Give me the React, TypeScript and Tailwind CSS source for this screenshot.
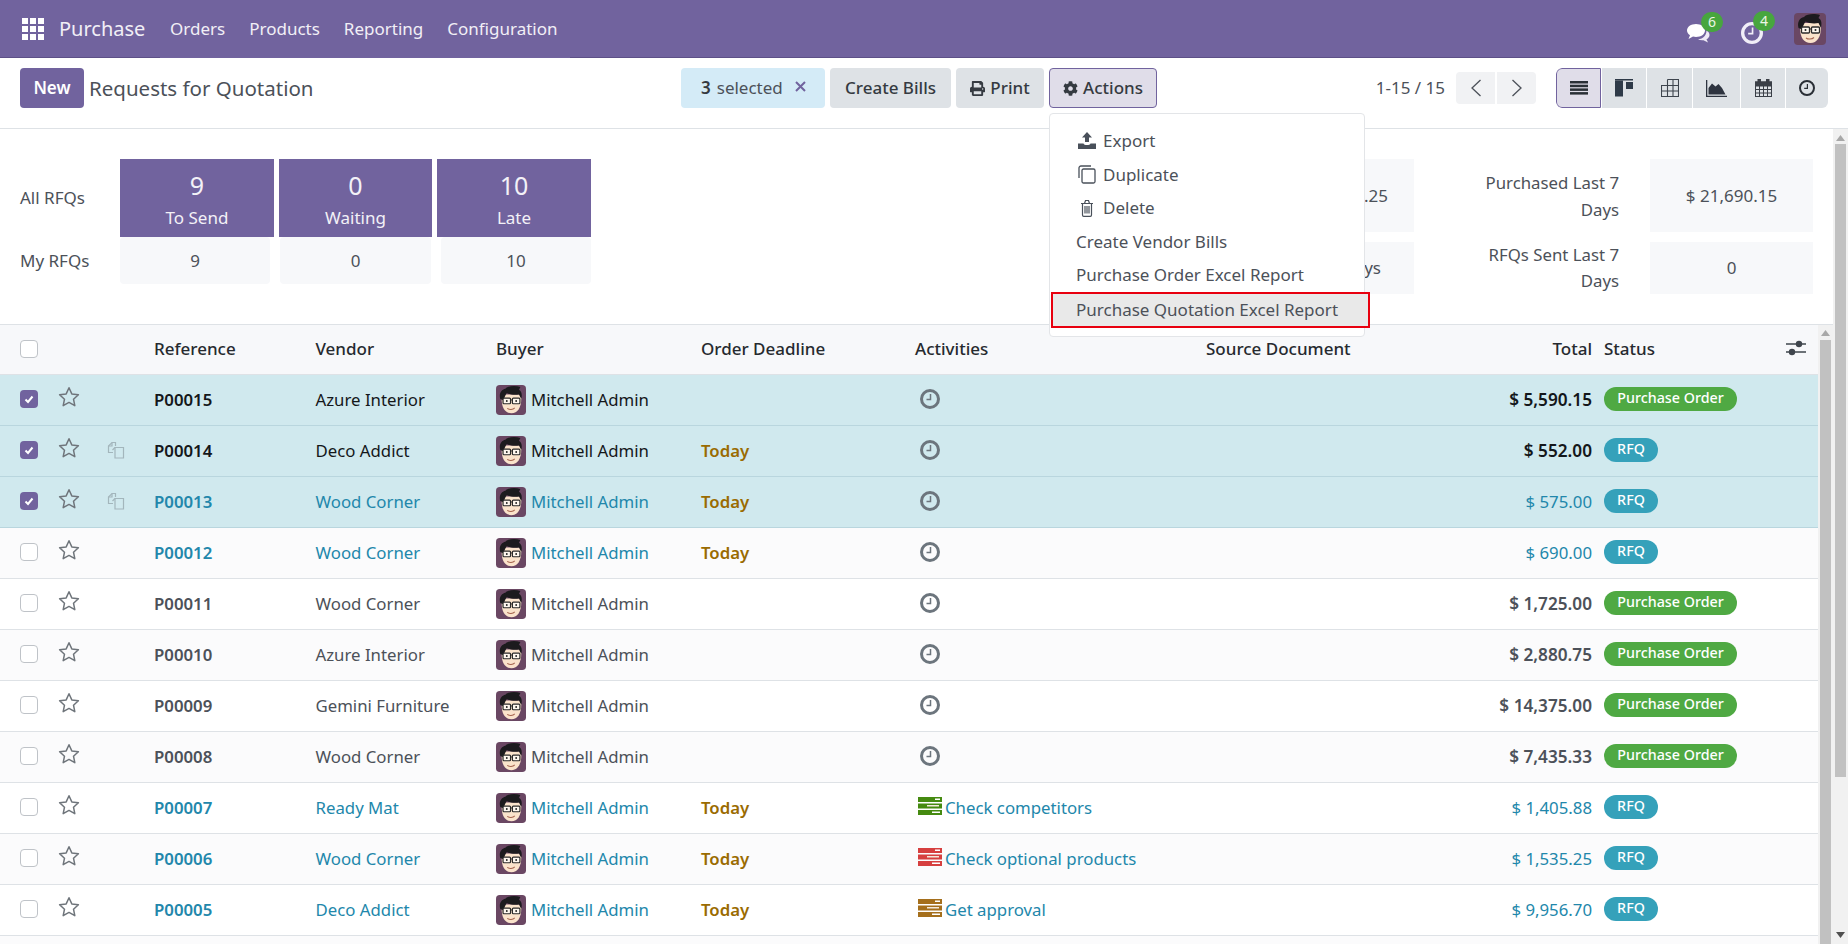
import { FaCog, FaPrint } from 'react-icons/fa';

type Row = {
  ref: string;
  vendor: string;
  total: string;
  status: 'po' | 'rfq';
  today?: boolean;
  selected?: boolean;
  link?: boolean;
  copy?: boolean;
  activity?: { label: string; color: string };
};

const rows: Row[] = [
  { ref: 'P00015', vendor: 'Azure Interior', total: '$ 5,590.15', status: 'po', selected: true },
  { ref: 'P00014', vendor: 'Deco Addict', total: '$ 552.00', status: 'rfq', today: true, selected: true, copy: true },
  { ref: 'P00013', vendor: 'Wood Corner', total: '$ 575.00', status: 'rfq', today: true, selected: true, link: true, copy: true },
  { ref: 'P00012', vendor: 'Wood Corner', total: '$ 690.00', status: 'rfq', today: true, link: true },
  { ref: 'P00011', vendor: 'Wood Corner', total: '$ 1,725.00', status: 'po' },
  { ref: 'P00010', vendor: 'Azure Interior', total: '$ 2,880.75', status: 'po' },
  { ref: 'P00009', vendor: 'Gemini Furniture', total: '$ 14,375.00', status: 'po' },
  { ref: 'P00008', vendor: 'Wood Corner', total: '$ 7,435.33', status: 'po' },
  { ref: 'P00007', vendor: 'Ready Mat', total: '$ 1,405.88', status: 'rfq', today: true, link: true, activity: { label: 'Check competitors', color: '#458a10' } },
  { ref: 'P00006', vendor: 'Wood Corner', total: '$ 1,535.25', status: 'rfq', today: true, link: true, activity: { label: 'Check optional products', color: '#d63f3f' } },
  { ref: 'P00005', vendor: 'Deco Addict', total: '$ 9,956.70', status: 'rfq', today: true, link: true, activity: { label: 'Get approval', color: '#a56f1c' } },
];

function Avatar({ size }: { size: number }) {
  return (
    <svg width={size} height={size} viewBox="0 0 32 32" className="shrink-0">
      <rect width="32" height="32" rx="4" fill="#6a4763" />
      <path d="M6 14c0 11 4 16 10.500 16S27 24 27 14l-2-4H9z" fill="#fae3cb" />
      <path d="M4.500 15C3 9 5.500 5 10 4c3-3.500 11-3.500 16-2l-1.500 3c3 1.500 3.500 5 2.500 10l-2.500-5c-4 1-9.500 .5-13-1.500-1 2-2 3-3 6.500l-1.500 1z" fill="#1c1b1e" />
      <rect x="7.500" y="14" width="8" height="6" rx="1" fill="#fff8ef" stroke="#2b2b2b" strokeWidth="1.300" />
      <rect x="17.500" y="14" width="8" height="6" rx="1" fill="#fff8ef" stroke="#2b2b2b" strokeWidth="1.300" />
      <path d="M15.500 16h2" stroke="#2b2b2b" strokeWidth="1" />
      <circle cx="11.500" cy="17" r="1" fill="#222" />
      <circle cx="21.500" cy="17" r="1" fill="#222" />
      <path d="M12 25c2 1.500 6 1.500 8-.5" stroke="#a5654f" strokeWidth="1.100" fill="none" />
    </svg>
  );
}

function Clock({ size, color, width }: { size: number; color: string; width: number }) {
  return (
    <svg width={size} height={size} viewBox="0 0 20 20" fill="none" className="shrink-0">
      <circle cx="10" cy="10" r={10 - width / 2} stroke={color} strokeWidth={width} />
      <path d="M10.500 5v5.500H6.500" stroke={color} strokeWidth="1.500" />
    </svg>
  );
}

function Star() {
  return (
    <svg width="22" height="21" viewBox="0 0 22 21" fill="none" className="shrink-0">
      <path d="M11 1.800l2.800 6.100 6.600.8-4.900 4.500 1.300 6.500L11 16.400l-5.800 3.300 1.300-6.500L1.600 8.700l6.600-.8z" stroke="#6f757b" strokeWidth="1.500" strokeLinejoin="round" />
    </svg>
  );
}

function CopyIcon() {
  return (
    <svg width="18" height="18" viewBox="0 0 18 18" fill="none" stroke="#a3b6bc" strokeWidth="1.200" className="shrink-0">
      <path d="M6 11.500H1.500V5L5 1.500h3.500V5" />
      <path d="M8 6.500h8.500v10.500H8z" />
      <path d="M5 1.500V5H1.500M8 6.500L5.500 9" />
    </svg>
  );
}

function ActivityIcon({ color }: { color: string }) {
  return (
    <svg width="24" height="18" viewBox="0 0 24 18" className="shrink-0">
      <rect width="24" height="5" fill={color} />
      <rect y="6.500" width="24" height="5" fill={color} />
      <rect y="13" width="24" height="5" fill={color} />
      <rect x="17" y="1.500" width="5" height="1.500" fill="#fff" />
      <rect x="9" y="8" width="12" height="1.500" fill="#f3e9dc" />
      <rect x="14" y="14.500" width="8" height="1.500" fill="#fff" />
    </svg>
  );
}

function Check({ on }: { on?: boolean }) {
  if (on) {
    return (
      <span className="flex h-[18px] w-[18px] items-center justify-center rounded-[4px] bg-[#71639e]">
        <svg width="12" height="12" viewBox="0 0 12 12" fill="none">
          <path d="M2.500 6.500l2.500 2.500 4.500-5.500" stroke="#fff" strokeWidth="2" />
        </svg>
      </span>
    );
  }
  return <span className="block h-[18px] w-[18px] rounded-[4px] border border-[#bfc3c8] bg-white" />;
}

function TopBar() {
  return (
    <nav className="flex h-[58px] shrink-0 bg-[#71639e] text-white">
      <div className="flex h-full w-[160px] shrink-0 items-center border-b border-[#5d5087] pl-[22px]">
        <svg width="22" height="22" viewBox="0 0 22 22" fill="#fff" className="shrink-0">
          <rect width="6" height="6" />
          <rect x="8" width="6" height="6" />
          <rect x="16" width="6" height="6" />
          <rect y="8" width="6" height="6" />
          <rect x="8" y="8" width="6" height="6" />
          <rect x="16" y="8" width="6" height="6" />
          <rect y="16" width="6" height="6" />
          <rect x="8" y="16" width="6" height="6" />
          <rect x="16" y="16" width="6" height="6" />
        </svg>
        <span className="ml-[15px] text-[20px] text-[#f1eff6]">Purchase</span>
      </div>
      <div className="flex h-full items-center gap-[24px] pl-[10px] text-[17px] text-[#f1eff6]">
        <span>Orders</span>
        <span>Products</span>
        <span>Reporting</span>
        <span>Configuration</span>
      </div>
      <div className="ml-auto flex h-full w-[1278px] items-center justify-end border-b border-[#5d5087] pr-[22px]">
        <div className="relative mr-[31px] mt-[2px]">
          <svg width="24" height="20" viewBox="0 0 24 20" fill="#fff" className="mt-[6px] block">
            <path d="M10 1c5 0 9 2.800 9 6.500S15 14 10 14c-1 0-2-.1-3-.4L2.500 16 4 12.300C2 11 1 9.400 1 7.500 1 3.800 5 1 10 1z" />
            <path d="M20.500 7.500c2 1.200 3 2.800 3 4.500s-1 3.200-3 4.300l1.500 3.200-4.500-2.300c-2 .3-4-.1-5.500-1 4 0 8.500-3 8.500-8.700z" fill="#eee9f6" />
          </svg>
          <span className="absolute left-[15px] top-[-5px] flex h-[20px] w-[22px] items-center justify-center rounded-full bg-[#47a63e] text-[14px] text-[#eef6e6]">6</span>
        </div>
        <div className="relative mr-[31px] mt-[2px]">
          <div className="mt-[6px]">
            <Clock size={22} color="#f1eef8" width={3} />
          </div>
          <span className="absolute left-[12px] top-[-5px] flex h-[20px] w-[22px] items-center justify-center rounded-full bg-[#47a63e] text-[14px] text-[#eef6e6]">4</span>
        </div>
        <Avatar size={32} />
      </div>
    </nav>
  );
}

function ViewButton({ active, w, children }: { active?: boolean; w: string; children: React.ReactNode }) {
  return (
    <span className={`flex h-[40px] items-center justify-center ${w} ${active ? 'rounded-l-[6px] border border-[#71639e] bg-[#e0dde9]' : 'bg-[#dee2e6]'}`}>
      {children}
    </span>
  );
}

function ActionsMenu() {
  const item = 'flex h-[33.600px] items-center pl-[26px] text-[17px] text-[#4c5159]';
  return (
    <div className="absolute left-0 top-[45px] z-20 h-[224px] w-[316px] rounded-[4px] border border-[#e3e5e8] bg-white pt-[10px]">
      <div className={item}>
        <svg width="18" height="17" viewBox="0 0 18 17" fill="#49505a" className="mr-[7px] ml-[2px]">
          <path d="M9 0l5 5.500h-3V10H7V5.500H4z" />
          <path d="M0 11.500h5.500c.5 1 1.500 1.500 3.500 1.500s3-.5 3.500-1.500H18V17H0z" />
        </svg>
        Export
      </div>
      <div className={item}>
        <svg width="18" height="19" viewBox="0 0 18 19" fill="none" stroke="#49505a" strokeWidth="1.300" className="mr-[7px] ml-[2px]">
          <path d="M1 13V3c0-1 .8-2 2-2h10" />
          <rect x="4" y="4" width="13" height="14" rx="1.500" />
        </svg>
        Duplicate
      </div>
      <div className={item}>
        <svg width="18" height="18" viewBox="0 0 18 18" fill="none" stroke="#49505a" strokeWidth="1.200" className="mr-[7px] ml-[2px]">
          <path d="M3 4.500h12M4.500 4.500V16c0 .8.500 1.300 1.200 1.300h6.600c.7 0 1.200-.5 1.200-1.300V4.500M6.500 4.500l1-3h3l1 3M7 7v7.500M9 7v7.500M11 7v7.500" />
        </svg>
        Delete
      </div>
      <div className={item}>Create Vendor Bills</div>
      <div className={item}>Purchase Order Excel Report</div>
      <div className="ml-px flex h-[36px] w-[319px] items-center border-2 border-[#e8000f] bg-[#e9e9e9] pl-[23px] text-[17px] text-[#4c5159]">
        Purchase Quotation Excel Report
      </div>
    </div>
  );
}

function ControlPanel() {
  return (
    <div className="flex h-[71px] shrink-0 items-start border-b border-[#dee2e6] pt-[10px]">
      <div className="flex w-[681px] shrink-0 items-center pl-[20px]">
        <span className="flex h-[40px] w-[64px] items-center justify-center rounded-[4px] bg-[#71639e] text-[17px] font-semibold text-white">New</span>
        <span className="ml-[5px] text-[20.500px] text-[#4c5159]">Requests for Quotation</span>
      </div>
      <div className="flex items-center gap-[5px] text-[17px] text-[#353a41]">
        <span className="flex h-[40px] w-[144px] items-center rounded-[4px] bg-[#d4ebf7] pl-[20px] text-[#4c5159]">
          <b className="mr-[6px] font-semibold text-[#353a41]">3</b>selected
          <svg width="13" height="13" viewBox="0 0 13 13" className="ml-[11px] mb-[4px]">
            <path d="M2 2l9 9M11 2l-9 9" stroke="#71639e" strokeWidth="2" />
          </svg>
        </span>
        <span className="flex h-[40px] w-[121px] items-center justify-center rounded-[4px] bg-[#dee2e6] font-medium">Create Bills</span>
        <span className="flex h-[40px] w-[88px] items-center justify-center gap-[5px] rounded-[4px] bg-[#dee2e6] font-medium">
          <FaPrint size={15} />
          Print
        </span>
        <div className="relative">
          <span className="flex h-[40px] w-[108px] items-center justify-center gap-[5px] rounded-[4px] border border-[#71639e] bg-[#e0dde9] font-medium">
            <FaCog size={15} />
            Actions
          </span>
          <ActionsMenu />
        </div>
      </div>
      <div className="ml-auto flex items-center pr-[20px]">
        <span className="mr-[11px] text-[17px] text-[#4c5159]">1-15 / 15</span>
        <span className="flex h-[32px] w-[39px] items-center justify-center rounded-l-[4px] bg-[#f1f2f4]">
          <svg width="12" height="18" viewBox="0 0 12 18" fill="none"><path d="M10.500 1L2 9l8.500 8" stroke="#4c5159" strokeWidth="1.300" /></svg>
        </span>
        <span className="ml-[2px] flex h-[32px] w-[39px] items-center justify-center rounded-r-[4px] bg-[#f1f2f4]">
          <svg width="12" height="18" viewBox="0 0 12 18" fill="none"><path d="M1.500 1L10 9l-8.500 8" stroke="#4c5159" strokeWidth="1.300" /></svg>
        </span>
        <div className="ml-[20px] flex gap-px overflow-hidden rounded-[6px]">
          <ViewButton active w="w-[45px]">
            <svg width="18" height="14" viewBox="0 0 18 14" fill="#2a2f36">
              <rect width="18" height="2.500" />
              <rect y="3.700" width="18" height="2.500" />
              <rect y="7.400" width="18" height="2.500" />
              <rect y="11.100" width="18" height="2.500" />
            </svg>
          </ViewButton>
          <ViewButton w="w-[44px]">
            <svg width="18" height="18" viewBox="0 0 18 18" fill="#2e3a48">
              <rect width="18" height="1.500" />
              <rect y="1.500" width="8" height="16" />
              <rect x="11" y="3" width="7" height="7" />
            </svg>
          </ViewButton>
          <ViewButton w="w-[45px]">
            <svg width="18" height="18" viewBox="0 0 18 18" fill="none" stroke="#3d444d" strokeWidth="1.100">
              <path d="M6.500.5h11v17H.5v-11h17M.5 12h17M6.500.5v17M12 .5v17" />
            </svg>
          </ViewButton>
          <ViewButton w="w-[47px]">
            <svg width="21" height="17" viewBox="0 0 21 17" fill="#2e3440">
              <path d="M0 0h1.300v15.700H21V17H0z" />
              <path d="M2.500 14.500V8L6 3.500l3.500 3L12.500 4l3.500 4 3.500 6.500z" />
            </svg>
          </ViewButton>
          <ViewButton w="w-[44px]">
            <svg width="17" height="18" viewBox="0 0 17 18" fill="none" stroke="#3a3f47" strokeWidth="1">
              <rect x=".5" y="3" width="16" height="14.500" />
              <path d="M.5 7h16M.5 10.500h16M.5 14h16M4.500 7v10.500M8.500 7v10.500M12.500 7v10.500" />
              <rect x="3" y="0.500" width="2.500" height="4" fill="#3a3f47" />
              <rect x="11.500" y="0.500" width="2.500" height="4" fill="#3a3f47" />
              <rect x=".5" y="3" width="16" height="3.500" fill="#3a3f47" />
            </svg>
          </ViewButton>
          <ViewButton w="w-[42px]">
            <Clock size={16} color="#2a2f36" width={2.500} />
          </ViewButton>
        </div>
      </div>
    </div>
  );
}

function Dashboard() {
  return (
    <div className="flex h-[195px] shrink-0 pt-[30px] text-[17px] text-[#4c5159]">
      <div className="w-[591px] shrink-0">
        <div className="flex h-[78px] items-center">
          <span className="w-[120px] pl-[20px]">All RFQs</span>
          <div className="flex gap-[5px]">
            {[
              ['9', 'To Send', 'w-[154px]'],
              ['0', 'Waiting', 'w-[153px]'],
              ['10', 'Late', 'w-[154px]'],
            ].map(([n, label, w]) => (
              <div key={label} className={`flex h-[78px] flex-col items-center justify-center bg-[#71639e] pt-[3px] text-[#f3f1f7] ${w}`}>
                <span className="text-[25px] leading-[32px]">{n}</span>
                <span className="mt-[5px] leading-[24px]">{label}</span>
              </div>
            ))}
          </div>
        </div>
        <div className="flex h-[47px] items-center">
          <span className="w-[120px] pl-[20px]">My RFQs</span>
          <div className="flex gap-[10px]">
            {[
              ['9', 'w-[150px]'],
              ['0', 'w-[151px]'],
              ['10', 'w-[150px]'],
            ].map(([n, w]) => (
              <div key={w} className={`flex h-[47px] items-center justify-center rounded-[4px] bg-[#f7f8fa] ${w}`}>{n}</div>
            ))}
          </div>
        </div>
      </div>
      <div className="ml-auto mr-[20px] grid h-[135px] grid-cols-[163px_205px_31px_163px] grid-rows-[73px_52px] gap-y-[10px]">
        <div className="flex items-center justify-end bg-[#f7f8fa] pr-[26px]">$ 4,820.25</div>
        <div className="ml-auto w-[160px] self-center text-right text-[16.800px] leading-[27px]">Purchased Last 7 Days</div>
        <div />
        <div className="flex items-center justify-center bg-[#f7f8fa]">$ 21,690.15</div>
        <div className="flex items-center justify-end bg-[#f7f8fa] pr-[33px]">12 Days</div>
        <div className="ml-auto w-[160px] self-center text-right text-[16.800px] leading-[26px]">RFQs Sent Last 7 Days</div>
        <div />
        <div className="flex items-center justify-center bg-[#f7f8fa]">0</div>
      </div>
    </div>
  );
}

function RowView({ row, index }: { row: Row; index: number }) {
  const base = row.link ? 'text-[#2287ab]' : row.selected ? 'text-[#14171a]' : 'text-[#4c5159]';
  const bg = row.selected ? 'bg-[#d0e9ee] border-[#b9d6de]' : index % 2 === 1 ? 'bg-[#fbfbfc] border-[#dee2e6]' : 'bg-white border-[#dee2e6]';
  return (
    <div className={`grid h-[51px] grid-cols-[58px_49px_47px_161.500px_180.500px_205px_214px_291px_386px_1fr] items-center border-b text-[16.800px] ${base} ${bg}`}>
      <div className="mb-[3px] pl-[20px]">
        <Check on={row.selected} />
      </div>
      <div className="mb-[8px]">
        <Star />
      </div>
      <div className="mb-[3px]">{row.copy && <CopyIcon />}</div>
      <div className="font-semibold">{row.ref}</div>
      <div>{row.vendor}</div>
      <div className="flex items-center gap-[5px]">
        <Avatar size={30} />
        Mitchell Admin
      </div>
      <div className="font-semibold text-[#9a6b01]">{row.today ? 'Today' : ''}</div>
      <div className="flex items-center pl-[3px]">
        {row.activity ? (
          <>
            <span className="mb-[5px] mr-[3px]">
              <ActivityIcon color={row.activity.color} />
            </span>
            <span className="whitespace-nowrap text-[#2287ab]">{row.activity.label}</span>
          </>
        ) : (
          <span className="mb-[3px] ml-[2px]">
            <Clock size={20} color="#6c757d" width={3} />
          </span>
        )}
      </div>
      <div className={`text-right ${row.link ? '' : 'text-[17.200px] font-semibold'}`}>{row.total}</div>
      <div className="mb-[3px] pl-[12px]">
        {row.status === 'po' ? (
          <span className="flex h-[24px] w-[133px] items-center justify-center rounded-full bg-[#4fa943] pb-[2px] text-[14.300px] font-medium text-white">Purchase Order</span>
        ) : (
          <span className="flex h-[24px] w-[54px] items-center justify-center rounded-full bg-[#35a1ba] pb-[2px] text-[14.300px] font-medium text-white">RFQ</span>
        )}
      </div>
    </div>
  );
}

function OrdersTable() {
  return (
    <div className="flex min-h-0 flex-1 border-t border-[#dee2e6]">
      <div className="min-w-0 flex-1 overflow-hidden bg-[#fbfbfc]">
        <div className="grid h-[50px] grid-cols-[58px_49px_47px_161.500px_180.500px_205px_214px_291px_386px_1fr] items-center border-b border-[#dee2e6] bg-[#f7f8fa] pb-[2px] text-[17px] font-medium text-[#262a2f]">
          <div className="pl-[20px]">
            <Check />
          </div>
          <div />
          <div />
          <div>Reference</div>
          <div>Vendor</div>
          <div>Buyer</div>
          <div>Order Deadline</div>
          <div>Activities</div>
          <div className="flex justify-between">
            <span>Source Document</span>
            <span>Total</span>
          </div>
          <div className="relative pl-[12px]">
            Status
            <svg width="20" height="16" viewBox="0 0 20 16" className="absolute right-[12px] top-[4px]">
              <path d="M0 4h20M0 12h20" stroke="#3f454c" strokeWidth="1.300" />
              <circle cx="13" cy="4" r="3.200" fill="#3f454c" />
              <circle cx="6" cy="12" r="3.200" fill="#3f454c" />
            </svg>
          </div>
        </div>
        {rows.map((row, i) => (
          <RowView key={row.ref} row={row} index={i} />
        ))}
      </div>
      <div className="flex w-[15px] shrink-0 flex-col items-center bg-[#f1f1f1] pt-[5px]">
        <svg width="9" height="6" viewBox="0 0 9 6" fill="#a8a8a8"><path d="M4.500 0L9 6H0z" /></svg>
        <div className="mt-[4px] w-[11px] flex-1 bg-[#c1c1c1]" />
      </div>
    </div>
  );
}

export default function App() {
  return (
    <div className="flex h-[944px] w-[1848px] flex-col overflow-hidden bg-white font-['Noto_Sans',sans-serif]">
      <TopBar />
      <ControlPanel />
      <div className="flex min-h-0 flex-1">
        <div className="flex min-w-0 flex-1 flex-col">
          <Dashboard />
          <OrdersTable />
        </div>
        <div className="flex w-[15px] shrink-0 flex-col items-center bg-[#f1f1f1] pt-[6px]">
          <svg width="9" height="6" viewBox="0 0 9 6" fill="#a8a8a8"><path d="M4.500 0L9 6H0z" /></svg>
          <div className="mt-[3px] h-[633px] w-[11px] bg-[#c1c1c1]" />
          <svg width="9" height="6" viewBox="0 0 9 6" fill="#505050" className="mt-auto mb-[6px]"><path d="M0 0h9L4.500 6z" /></svg>
        </div>
      </div>
    </div>
  );
}
